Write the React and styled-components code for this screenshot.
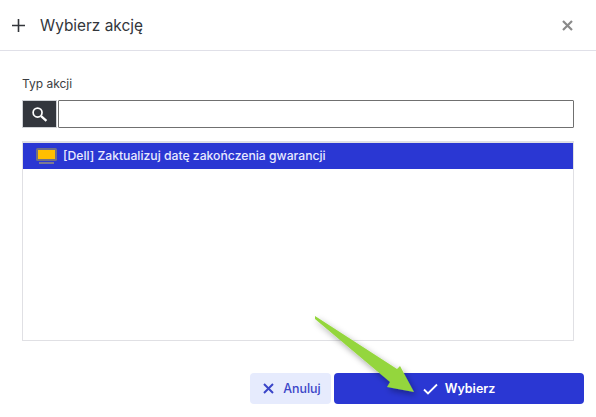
import React from 'react';
import styled, { createGlobalStyle } from 'styled-components';

const Global = createGlobalStyle`
  html, body {
    margin: 0;
    padding: 0;
    background: #fff;
  }
  body {
    font-family: Inter, "Liberation Sans", sans-serif;
  }
`
const Dialog = styled.div`
  position: relative;
  width: 596px;
  height: 417px;
  background: #fff;
  overflow: hidden;
  display: flex;
  flex-direction: column;
`
const Header = styled.div`
  height: 50px;
  box-sizing: content-box;
  border-bottom: 1px solid #e0e0e8;
  display: flex;
  align-items: center;
  padding: 0 23px 0 11px;
`
const Title = styled.div`
  flex: 1;
  margin-left: 14px;
  font-size: 15.4px;
  color: #33363b;
`
const Body = styled.div`
  flex: 1;
  display: flex;
  flex-direction: column;
  padding: 25px 22px 0;
`
const Label = styled.div`
  font-size: 12px;
  line-height: 15px;
  color: #3a3d42;
  margin-bottom: 9px;
`
const SearchRow = styled.div`
  display: flex;
  height: 28px;
  gap: 1px;
  margin-bottom: 13px;
`
const SearchBtn = styled.div`
  width: 35px;
  background: #33363d;
  border: 1px solid #d0d2d6;
  box-sizing: border-box;
  display: flex;
  align-items: center;
  justify-content: center;
`
const SearchInput = styled.input`
  flex: 1;
  min-width: 0;
  box-sizing: border-box;
  border: 1px solid #707070;
  border-radius: 1px;
  background: #fff;
  outline: none;
`
const List = styled.div`
  height: 200px;
  box-sizing: border-box;
  border: 1px solid #e0e0e4;
  border-top-width: 2px;
`
const Row = styled.div`
  height: 26px;
  background: ${p => (p.$selected ? '#2a37d3' : 'transparent')};
  color: #e8eaff;
  display: flex;
  align-items: center;
  padding-left: 13px;
  font-size: 12.2px;
  font-weight: 500;
  margin-bottom: 1px;
`
const RowText = styled.span`
  margin-left: 6px;
  position: relative;
  top: -1px;
`
const Footer = styled.div`
  display: flex;
  justify-content: flex-end;
  gap: 3px;
  padding: 32px 12px 13px 0;
`
const Button = styled.button`
  height: 31px;
  width: ${p => p.$width}px;
  border: none;
  border-radius: 4px;
  background: ${p => (p.$primary ? '#2a37d3' : '#e6ebfd')};
  color: ${p => (p.$primary ? '#fff' : '#3a45c8')};
  font-family: inherit;
  font-size: ${p => (p.$primary ? 12.5 : 12.4)}px;
  font-weight: ${p => (p.$primary ? 600 : 500)};
  display: flex;
  align-items: center;
  justify-content: center;
  gap: ${p => (p.$primary ? 7 : 9)}px;
  padding: ${p => (p.$primary ? '0' : '0 0 0 3px')};
`
const Arrow = styled.svg`
  position: absolute;
  left: 300px;
  top: 305px;
  pointer-events: none;
`

function App() {
  return (
    <Dialog>
      <Global />
      <Header>
        <svg width="15" height="15" viewBox="0 0 15 15">
          <path d="M7.5 1v13M1 7.5h13" stroke="#33363b" strokeWidth="1.6" />
        </svg>
        <Title>Wybierz akcję</Title>
        <svg width="11" height="11" viewBox="0 0 11 11">
          <path d="M1 1l9 9M10 1l-9 9" stroke="#8a8a8a" strokeWidth="2.2" />
        </svg>
      </Header>
      <Body>
        <Label>Typ akcji</Label>
        <SearchRow>
          <SearchBtn>
            <svg width="17" height="17" viewBox="0 0 16 16" fill="none">
              <circle cx="6.2" cy="6.2" r="4.2" stroke="#fff" strokeWidth="1.6" />
              <path d="M9.5 9.5l5 4.5" stroke="#fff" strokeWidth="2.2" />
            </svg>
          </SearchBtn>
          <SearchInput />
        </SearchRow>
        <List>
          <Row $selected>
            <svg width="21" height="17" viewBox="0 0 21 17">
              <rect x="0" y="0" width="21" height="13" rx="1.5" fill="#6f6f86" />
              <rect x="2" y="2" width="17" height="9" fill="#ffbe00" />
              <rect x="3" y="14" width="15" height="2" fill="#7c7a92" />
            </svg>
            <RowText>[Dell] Zaktualizuj datę zakończenia gwarancji</RowText>
          </Row>
        </List>
      </Body>
      <Footer>
        <Button $width={81}>
          <svg width="11" height="11" viewBox="0 0 11 11">
            <path d="M1 1l9 9M10 1l-9 9" stroke="#3a45c8" strokeWidth="2" />
          </svg>
          Anuluj
        </Button>
        <Button $primary $width={250}>
          <svg width="15" height="12" viewBox="0 0 15 12" fill="none">
            <path d="M1 6.5l4 4L14 1.5" stroke="#fff" strokeWidth="1.8" />
          </svg>
          Wybierz
        </Button>
      </Footer>
      <Arrow width="130" height="105" viewBox="0 0 130 105">
        <defs>
          <filter id="arrowShadow" x="-20%" y="-20%" width="140%" height="140%">
            <feDropShadow dx="2" dy="3" stdDeviation="3" floodColor="#000" floodOpacity="0.35" />
          </filter>
        </defs>
        <polygon
          points="15,11 97,64 100,61 114,87 87,82 90,77 15,14"
          fill="#94d63c"
          filter="url(#arrowShadow)"
        />
      </Arrow>
    </Dialog>
  );
}

export default App;
